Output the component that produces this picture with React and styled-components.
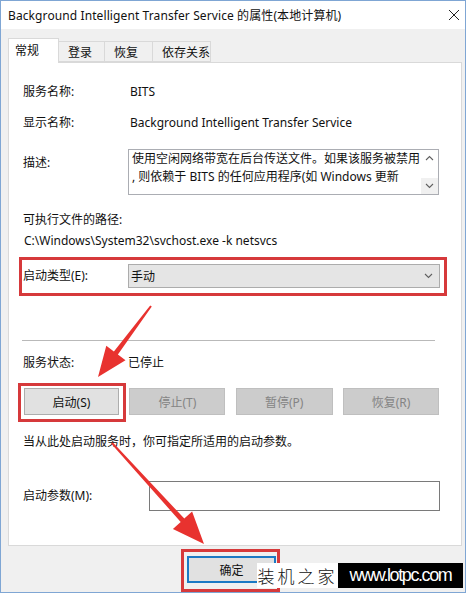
import React from "react";
import styled, { createGlobalStyle } from "styled-components";

const Global = createGlobalStyle`
  body {
    margin: 0;
    background: #ffffff;
    font-family: "Noto Sans", "Noto Sans CJK SC", sans-serif;
    font-size: 12px;
    color: #111;
  }
`;

const RED = "#d6393b";

const Window = styled.div`
  position: relative;
  box-sizing: border-box;
  width: 466px;
  height: 593px;
  border: 1px solid #7fa6d4;
  background: #f0f0f0;
  display: flex;
  flex-direction: column;
`;

const TitleBar = styled.div`
  height: 28px;
  background: #ffffff;
  display: flex;
  align-items: center;
  justify-content: space-between;
  padding: 0 5px 0 7px;
`;

const Title = styled.span`
  font-size: 12px;
  letter-spacing: 0.1px;
`;

const TabStrip = styled.div`
  display: flex;
  align-items: flex-end;
  height: 24px;
  margin-top: 9px;
  padding-left: 7px;
  position: relative;
  z-index: 1;
`;

const Tab = styled.div`
  box-sizing: border-box;
  width: ${p => p.w}px;
  height: ${p => (p.active ? 25 : 21)}px;
  margin-bottom: ${p => (p.active ? -1 : 0)}px;
  background: ${p => (p.active ? "#ffffff" : "#f0f0f0")};
  border: 1px solid #d9d9d9;
  border-bottom: ${p => (p.active ? "none" : "1px solid #d9d9d9")};
  border-left: ${p => (p.first ? "1px solid #d9d9d9" : "none")};
  display: flex;
  align-items: center;
  padding-left: ${p => (p.active ? 6 : 9)}px;
  padding-bottom: ${p => (p.active ? 2 : 0)}px;
`;

const Panel = styled.div`
  box-sizing: border-box;
  height: 484px;
  margin: 0 3px 0 7px;
  background: #ffffff;
  border: 1px solid #d9d9d9;
  padding: 19px 21px 0 14px;
  display: flex;
  flex-direction: column;
`;

const Row = styled.div`
  display: flex;
  align-items: ${p => p.align || "center"};
  min-height: 20px;
  margin-top: ${p => p.mt || 0}px;
`;

const Label = styled.div`
  width: ${p => p.w || 105}px;
  flex: none;
  line-height: 20px;
  padding-top: ${p => p.pt || 0}px;
`;

const Value = styled.div`
  line-height: 20px;
  padding-left: ${p => (p.pl === undefined ? 2 : p.pl)}px;
`;

const TextBox = styled.div`
  box-sizing: border-box;
  width: 311px;
  height: 46px;
  border: 1px solid #abadb3;
  display: flex;
`;

const TextLines = styled.div`
  flex: 1;
  overflow: hidden;
  padding: 0 0 0 3px;
  line-height: 18px;
  white-space: nowrap;
`;

const ScrollCol = styled.div`
  width: 17px;
  display: flex;
  flex-direction: column;
  justify-content: space-between;
  align-items: center;
`;

const ScrollBtn = styled.div`
  width: 17px;
  height: 16px;
  display: flex;
  align-items: center;
  justify-content: center;
  background: ${p => p.bg};
`;

const Highlight = styled.div`
  border: 3px solid ${RED};
  padding: ${p => p.pad};
  margin: ${p => p.m};
  flex: none;
`;

const Select = styled.div`
  box-sizing: border-box;
  flex: 1;
  height: 24px;
  background: #e5e5e5;
  border: 1px solid #acacac;
  display: flex;
  align-items: center;
  justify-content: space-between;
  padding: 0 6px 0 2px;
`;

const Separator = styled.div`
  height: 1px;
  background: #b9b9b9;
  margin: ${p => p.mt}px 5px 0 -1px;
`;

const ButtonRow = styled.div`
  display: flex;
  justify-content: space-between;
  margin-top: 15px;
  padding: 0 1px;
`;

const Button = styled.div`
  box-sizing: border-box;
  width: ${p => p.w || 96}px;
  height: 27px;
  display: flex;
  align-items: center;
  justify-content: center;
  background: ${p => (p.disabled ? "#cccccc" : "#e1e1e1")};
  border: 1px solid ${p => (p.disabled ? "#bfbfbf" : "#adadad")};
  color: ${p => (p.disabled ? "#848484" : "#111")};
`;

const Input = styled.div`
  box-sizing: border-box;
  flex: 1;
  height: 30px;
  border: 1px solid #7a7a7a;
  background: #fff;
`;

const Footer = styled.div`
  display: flex;
  padding-left: 180px;
  margin-top: 3px;
`;

const OkButton = styled.div`
  box-sizing: border-box;
  width: 89px;
  height: 27px;
  background: #e1e1e1;
  border: 2px solid #1b79c4;
  display: flex;
  align-items: center;
  justify-content: center;
`;

const Watermark = styled.div`
  position: absolute;
  left: 256px;
  top: 562px;
  height: 25px;
  display: flex;
  z-index: 3;
`;

const MarkCn = styled.div`
  width: 81px;
  background: #fff;
  display: flex;
  align-items: center;
  justify-content: center;
  font-family: "Noto Sans CJK SC", sans-serif;
  font-weight: 300;
  font-size: 17px;
  letter-spacing: 3px;
  color: #111;
`;

const MarkUrl = styled.div`
  width: 125px;
  background: #000;
  color: #fff;
  display: flex;
  align-items: center;
  justify-content: center;
  font-family: "Liberation Sans", sans-serif;
  font-size: 18px;
  letter-spacing: -1.4px;
`;

const Overlay = styled.svg`
  position: absolute;
  left: -1px;
  top: -1px;
  width: 468px;
  height: 594px;
  pointer-events: none;
  z-index: 2;
`;

const Chevron = ({ up }) => (
  <svg width="9" height="6" viewBox="0 0 9 6">
    <path d={up ? "M1 5 L4.5 1.5 L8 5" : "M1 1 L4.5 4.5 L8 1"} fill="none" stroke="#606060" strokeWidth="1.1" />
  </svg>
);

const tabs = [
  { t: "常规", w: 51, active: true },
  { t: "登录", w: 46 },
  { t: "恢复", w: 48 },
  { t: "依存关系", w: 58 },
];

export default function App() {
  return (
    <>
      <Global />
      <Window>
        <TitleBar>
          <Title>Background Intelligent Transfer Service 的属性(本地计算机)</Title>
          <svg width="12" height="12" viewBox="0 0 12 12">
            <path d="M1 1 L11 11 M11 1 L1 11" stroke="#222" strokeWidth="1" />
          </svg>
        </TitleBar>

        <TabStrip>
          {tabs.map((tab, i) => (
            <Tab key={tab.t} w={tab.w} active={tab.active} first={i === 0}>
              {tab.t}
            </Tab>
          ))}
        </TabStrip>

        <Panel>
          <Row>
            <Label>服务名称:</Label>
            <Value>BITS</Value>
          </Row>
          <Row mt={11}>
            <Label>显示名称:</Label>
            <Value>Background Intelligent Transfer Service</Value>
          </Row>
          <Row mt={16} align="flex-start">
            <Label pt={4}>描述:</Label>
            <TextBox>
              <TextLines>
                <div>使用空闲网络带宽在后台传送文件。如果该服务被禁用</div>
                <div>, 则依赖于 BITS 的任何应用程序(如 Windows 更新</div>
              </TextLines>
              <ScrollCol>
                <ScrollBtn bg="#ffffff"><Chevron up /></ScrollBtn>
                <ScrollBtn bg="#f0f0f0"><Chevron /></ScrollBtn>
              </ScrollCol>
            </TextBox>
          </Row>
          <Row mt={15}>
            <Label w={300}>可执行文件的路径:</Label>
          </Row>
          <Row mt={1}>
            <Value pl={1}>C:\Windows\System32\svchost.exe -k netsvcs</Value>
          </Row>

          <Highlight pad="4px 4px 5px 1px" m="6px -7px 0 -4px">
            <Row>
              <Label>启动类型(E):</Label>
              <Select>
                <span>手动</span>
                <Chevron />
              </Select>
            </Row>
          </Highlight>

          <Separator mt={44} />

          <Row mt={12}>
            <Label>服务状态:</Label>
            <Value pl={0}>已停止</Value>
          </Row>

          <ButtonRow>
            <Highlight pad="2px 4px 4px 3px" m="-5px -7px -7px -6px">
              <Button w={95}>启动(S)</Button>
            </Highlight>
            <Button disabled>停止(T)</Button>
            <Button disabled w={97}>暂停(P)</Button>
            <Button disabled>恢复(R)</Button>
          </ButtonRow>

          <Row mt={17}>
            <Label w={400}>当从此处启动服务时，你可指定所适用的启动参数。</Label>
          </Row>

          <Row mt={29}>
            <Label w={126}>启动参数(M):</Label>
            <Input />
          </Row>
        </Panel>

        <Footer>
          <Highlight pad="4px 1px 6px 3px" m="0">
            <OkButton>确定</OkButton>
          </Highlight>
        </Footer>

        <Watermark>
          <MarkCn>装机之家</MarkCn>
          <MarkUrl>www.lotpc.com</MarkUrl>
        </Watermark>

        <Overlay viewBox="0 0 468 594">
          <polygon
            fill="#e8322f"
            points="151.8,306.6 117.9,354.5 125.5,360.2 98,377 106.3,345.8 113.9,351.5 150.2,305.4"
          />
          <polygon
            fill="#e8322f"
            points="111.3,443.7 180.7,522 172.9,529 204,544 192.1,511.6 184.3,518.6 112.7,442.3"
          />
        </Overlay>
      </Window>
    </>
  );
}
